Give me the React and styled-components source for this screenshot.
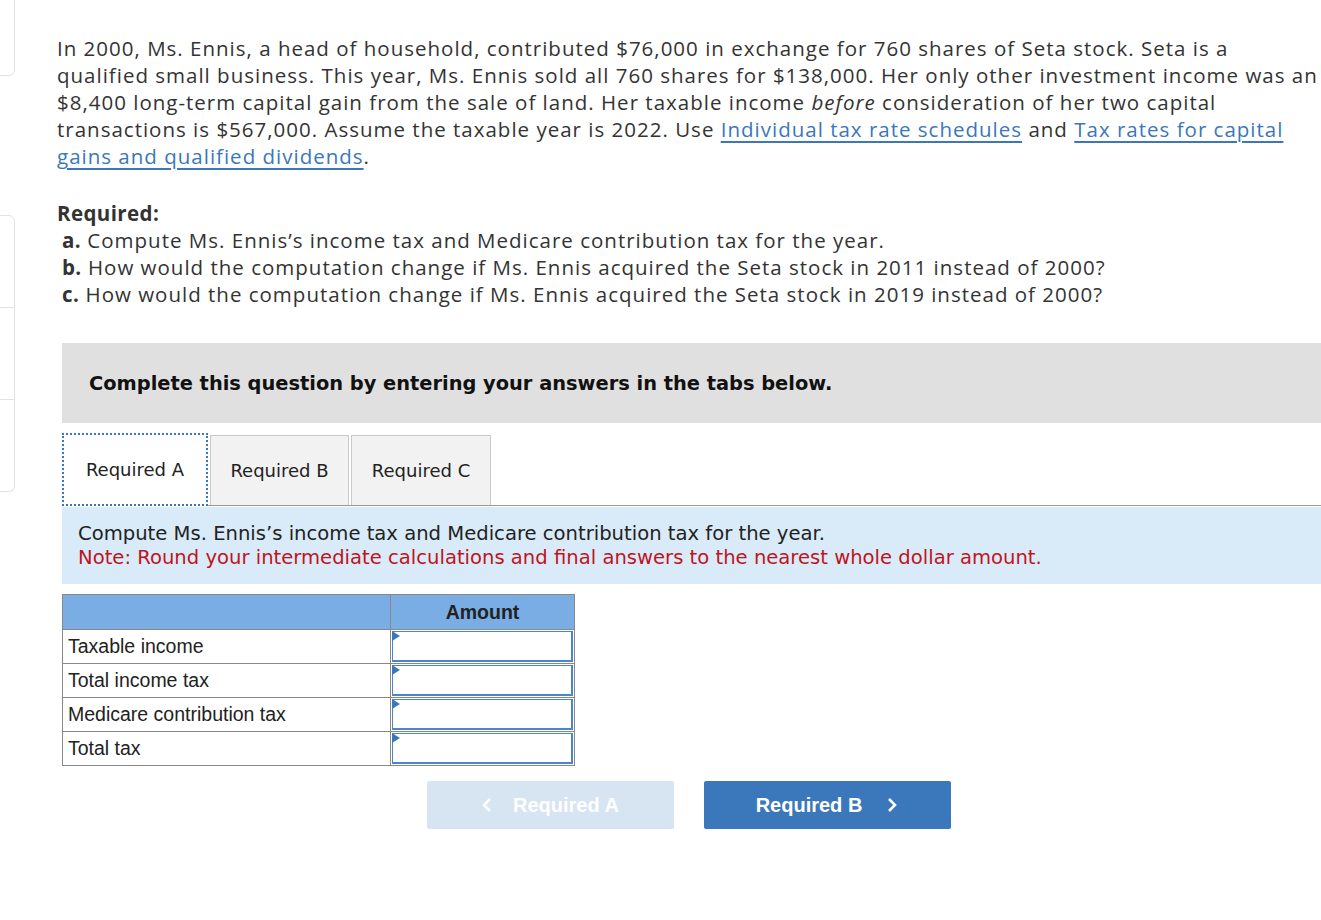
import styled, { createGlobalStyle } from 'styled-components';

const GlobalStyle = createGlobalStyle`
    html, body {
        margin: 0;
        padding: 0;
        background: #fff;
        overflow-x: hidden;
    }
    body {
        font-family: 'Open Sans', Lato, sans-serif;
        color: #333;
    }
`;

const Page = styled.div`
    position: relative;
    min-height: 920px;
    padding: 35px 0 0 57px;
    box-sizing: border-box;
`;

// cut-off sidebar cards at the very left edge
const SideCards = styled.div`
    position: absolute;
    left: -20px;
    top: 0;
    width: 35px;
    display: flex;
    flex-direction: column;
`;

const SideCard = styled.div`
    box-sizing: border-box;
    height: ${(p) => p.h}px;
    margin-top: ${(p) => p.mt || 0}px;
    border: 1px solid #e3e3e3;
    border-top-width: ${(p) => (p.joined ? 0 : 1)}px;
    border-radius: ${(p) => p.radius};
`;

const Question = styled.p`
    margin: 0;
    max-width: 1263px;
    font-size: 20.5px;
    letter-spacing: 1px;
    line-height: 27px;
    color: #333;

    a {
        color: #3a77bb;
        text-decoration: underline;
        text-decoration-thickness: 1.5px;
        text-underline-offset: 4px;
    }
`;

const Required = styled.div`
    margin-top: 30px;
    font-size: 20.5px;
    letter-spacing: 1px;
    line-height: 27px;
    color: #333;
`;

const Heading = styled.div`
    font-weight: 700;
    letter-spacing: 0.4px;
`;

const Item = styled.div`
    padding-left: 5px;
    b {
        font-weight: 700;
        letter-spacing: 0.4px;
    }
`;

const Banner = styled.div`
    margin: 35px 0 0 5px;
    height: 80px;
    background: #e0e0e0;
    display: flex;
    align-items: center;
    padding-left: 27px;
    font-family: 'DejaVu Sans', Verdana, sans-serif;
    font-weight: 700;
    font-size: 19.4px;
    color: #111;
`;

const TabBar = styled.div`
    margin: 10px 0 0 5px;
    display: flex;
    align-items: flex-end;
    border-bottom: 1px solid #9a9a9a;
`;

const Tab = styled.div`
    box-sizing: border-box;
    width: ${(p) => p.w}px;
    height: ${(p) => (p.active ? 73 : 70)}px;
    margin-right: 2px;
    margin-bottom: ${(p) => (p.active ? -1 : 0)}px;
    display: flex;
    align-items: center;
    justify-content: center;
    font-family: 'DejaVu Sans', Verdana, sans-serif;
    font-size: 18px;
    color: #222;
    background: ${(p) => (p.active ? '#fff' : '#f2f2f2')};
    border: ${(p) => (p.active ? '2px dotted #3a77bb' : '1px solid #c9c9c9')};
    border-bottom: ${(p) => (p.active ? '2px dotted #3a77bb' : 'none')};
`;

const Info = styled.div`
    margin: 1px 0 0 5px;
    background: #d9ebf9;
    padding: 15px 16px 14px;
    font-family: 'DejaVu Sans', Verdana, sans-serif;
    font-size: 19.6px;
    line-height: 24px;
    color: #222;
`;

const Note = styled.div`
    color: #c0141c;
`;

const Table = styled.table`
    margin: 10px 0 0 5px;
    border-collapse: collapse;
    font-family: 'Liberation Sans', Arial, sans-serif;
    font-size: 19.5px;
    color: #222;
`;

const HeadCell = styled.th`
    height: 34px;
    padding: 0;
    background: #7aade4;
    border: 1px solid #888;
    font-weight: 700;
    font-size: 19.5px;
    text-align: center;
    width: ${(p) => p.w}px;
`;

const LabelCell = styled.td`
    height: 33px;
    padding: 0 0 0 5px;
    border: 1px solid #888;
`;

const InputCell = styled.td`
    position: relative;
    padding: 1px;
    border: 1px solid #888;
`;

const AmountInput = styled.input`
    display: block;
    box-sizing: border-box;
    width: 100%;
    height: 31px;
    border: 2px solid #4a86c8;
    border-top-width: 1px;
    border-left-width: 1px;
    outline: none;
    background: #fff;
`;

const Flag = styled.span`
    position: absolute;
    left: 1px;
    top: 1px;
    width: 0;
    height: 0;
    border-top: 5px solid transparent;
    border-bottom: 5px solid transparent;
    border-left: 8px solid #3a77bb;
`;

const ButtonRow = styled.div`
    margin: 15px 0 0 5px;
    width: 1253px;
    display: flex;
    justify-content: center;
    gap: 30px;
`;

const NavButton = styled.button`
    width: 247px;
    height: 48px;
    border: none;
    border-radius: 2px;
    display: flex;
    align-items: center;
    justify-content: center;
    gap: ${(p) => (p.prev ? 20 : 24)}px;
    font-family: 'Liberation Sans', Arial, sans-serif;
    font-weight: 700;
    font-size: 20px;
    color: #fff;
    background: ${(p) => (p.prev ? '#d7e4f2' : '#3a77bb')};
    cursor: ${(p) => (p.prev ? 'default' : 'pointer')};
`;

const Chevron = ({ dir }) => (
    <svg width="12" height="16" viewBox="0 0 12 16">
        <path
            d={dir === 'left' ? 'M9 2 L3 8 L9 14' : 'M3 2 L9 8 L3 14'}
            fill="none"
            stroke="#fff"
            strokeWidth="2.6"
        />
    </svg>
);

const rows = ['Taxable income', 'Total income tax', 'Medicare contribution tax', 'Total tax'];

export default function App() {
    return (
        <>
            <GlobalStyle />
            <Page>
                <SideCards>
                    <SideCard h={78} mt={-2} radius="0 0 6px 0" />
                    <SideCard h={93} mt={139} radius="6px 6px 0 0" />
                    <SideCard h={92} joined radius="0" />
                    <SideCard h={92} joined radius="0 0 6px 0" />
                </SideCards>

                <Question>
                    In 2000, Ms. Ennis, a head of household, contributed $76,000 in exchange for 760
                    shares of Seta stock. Seta is a qualified small business. This year, Ms. Ennis sold
                    all 760 shares for $138,000. Her only other investment income was an $8,400
                    long-term capital gain from the sale of land. Her taxable income <i>before</i>{' '}
                    consideration of her two capital transactions is $567,000. Assume the taxable year is
                    2022. Use <a href="#">Individual tax rate schedules</a> and{' '}
                    <a href="#">Tax rates for capital gains and qualified dividends</a>.
                </Question>

                <Required>
                    <Heading>Required:</Heading>
                    <Item>
                        <b>a.</b> Compute Ms. Ennis’s income tax and Medicare contribution tax for the year.
                    </Item>
                    <Item>
                        <b>b.</b> How would the computation change if Ms. Ennis acquired the Seta stock in
                        2011 instead of 2000?
                    </Item>
                    <Item>
                        <b>c.</b> How would the computation change if Ms. Ennis acquired the Seta stock in
                        2019 instead of 2000?
                    </Item>
                </Required>

                <Banner>Complete this question by entering your answers in the tabs below.</Banner>

                <TabBar>
                    <Tab active w={146}>Required A</Tab>
                    <Tab w={139}>Required B</Tab>
                    <Tab w={140}>Required C</Tab>
                </TabBar>

                <Info>
                    Compute Ms. Ennis’s income tax and Medicare contribution tax for the year.
                    <Note>Note: Round your intermediate calculations and final answers to the nearest whole dollar amount.</Note>
                </Info>

                <Table>
                    <thead>
                        <tr>
                            <HeadCell w={327} />
                            <HeadCell w={183}>Amount</HeadCell>
                        </tr>
                    </thead>
                    <tbody>
                        {rows.map((r) => (
                            <tr key={r}>
                                <LabelCell>{r}</LabelCell>
                                <InputCell>
                                    <AmountInput />
                                    <Flag />
                                </InputCell>
                            </tr>
                        ))}
                    </tbody>
                </Table>

                <ButtonRow>
                    <NavButton prev>
                        <Chevron dir="left" />
                        Required A
                    </NavButton>
                    <NavButton>
                        Required B
                        <Chevron dir="right" />
                    </NavButton>
                </ButtonRow>
            </Page>
        </>
    );
}
